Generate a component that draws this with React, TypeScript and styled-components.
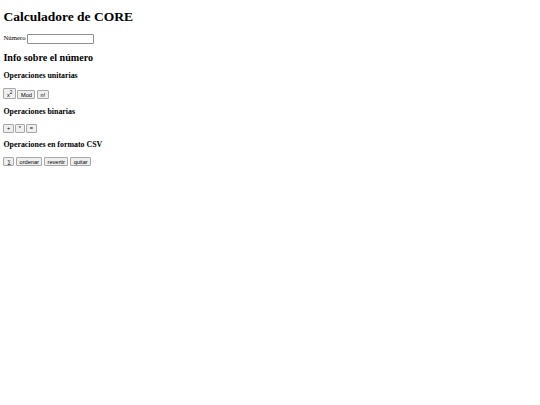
import { createGlobalStyle, styled } from "styled-components";

// la captura es la página a escala 540/1280: los tamaños por defecto van multiplicados por ~0.42
const GlobalStyle = createGlobalStyle`
  html, body {
    background: #ffffff;
  }
  body {
    margin: 3.4px;
    font-family: "Liberation Serif", "Times New Roman", serif;
    font-size: 6.75px;
    color: #000000;
  }
`;

const Title = styled.h1`
  font-size: 13.5px;
  font-weight: bold;
  margin: 6px 0 9px;
`;

const Section = styled.h2`
  font-size: 10.1px;
  font-weight: bold;
  margin: 8.4px 0;
`;

const SubSection = styled.h3`
  font-size: 7.9px;
  font-weight: bold;
  margin: 7.9px 0;
`;

const Field = styled.label`
  display: block;
`;

const NumberInput = styled.input`
  width: 63px;
  height: 6.5px;
  padding: 0.4px 0.8px;
  margin: 0;
  border: 1px solid #8f8f8f;
  border-radius: 1px;
  font-size: 5.6px;
  font-family: "Liberation Sans", Arial, sans-serif;
  vertical-align: middle;
`;

const ButtonRow = styled.div`
  display: flex;
  align-items: flex-end;
  gap: 1.7px;
`;

const OpButton = styled.button`
  font-family: "Liberation Sans", Arial, sans-serif;
  font-size: 5.6px;
  padding: 0.4px 2.5px;
  margin: 0;
  background: #efefef;
  border: 1px solid #a8a8a8;
  border-radius: 1px;
  color: #000000;
  cursor: pointer;
`;

const unitarias = ["Mod", "n!"];
const binarias = ["+", "*", "="];
const csv = ["∑", "ordenar", "revertir", "quitar"];

const App = () => {
  return (
    <>
      <GlobalStyle />
      <Title>Calculadore de CORE</Title>
      <Field>
        Número <NumberInput type="text" />
      </Field>
      <Section>Info sobre el número</Section>
      <SubSection>Operaciones unitarias</SubSection>
      <ButtonRow>
        <OpButton>
          x<sup>2</sup>
        </OpButton>
        {unitarias.map((op) => (
          <OpButton key={op}>{op}</OpButton>
        ))}
      </ButtonRow>
      <SubSection>Operaciones binarias</SubSection>
      <ButtonRow>
        {binarias.map((op) => (
          <OpButton key={op}>{op}</OpButton>
        ))}
      </ButtonRow>
      <SubSection>Operaciones en formato CSV</SubSection>
      <ButtonRow>
        {csv.map((op) => (
          <OpButton key={op}>{op}</OpButton>
        ))}
      </ButtonRow>
    </>
  );
};

export default App;
